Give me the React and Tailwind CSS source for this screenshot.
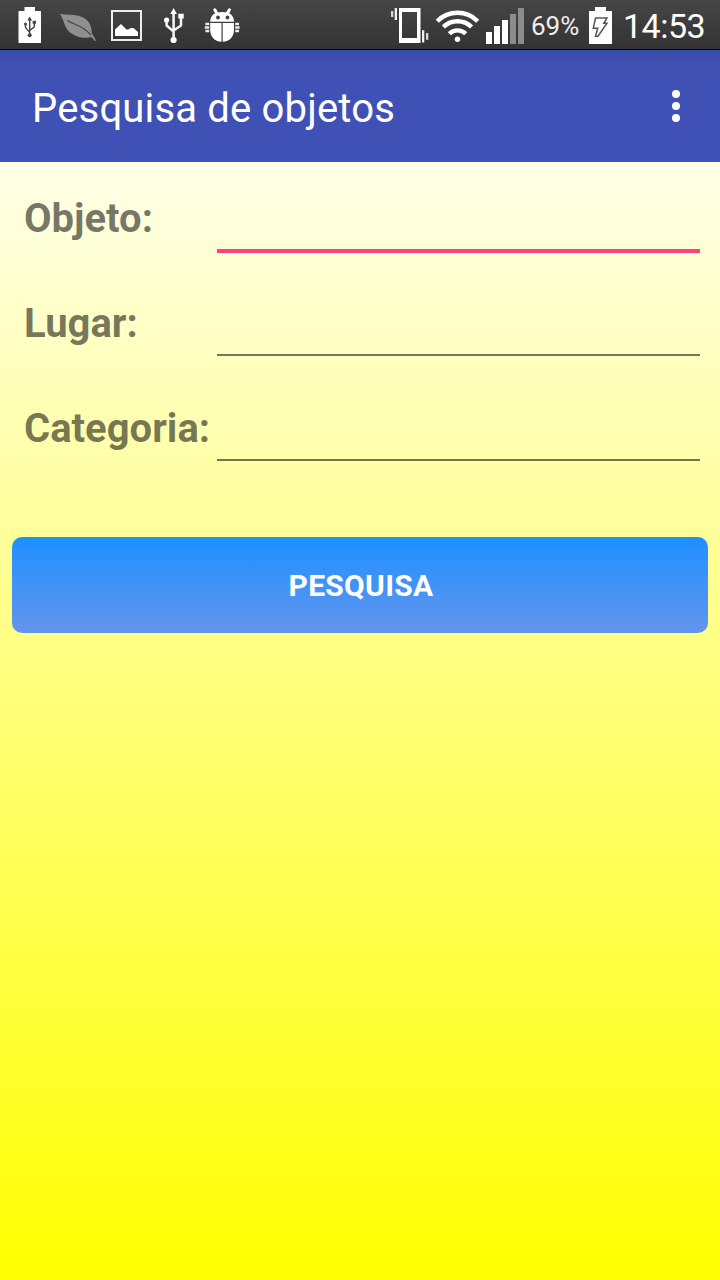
import React from 'react';

function UsbBatteryIcon() {
    return (
        <svg width="24" height="38" viewBox="18 6 24 38" className="shrink-0">
            <path d="M18.500 11h6V7h10.500v4h6v32H18.500z" fill="#fff" />
            <g stroke="#444" strokeWidth="1.400" fill="none">
                <path d="M29.700 19v16M25.500 24v3.600l4.200 4.600M34.300 23v4l-4.600 3.400" />
            </g>
            <g fill="#444">
                <path d="M29.700 16.600l2.400 3.800h-4.800z" />
                <circle cx="25.500" cy="24" r="1.500" />
                <path d="M32.600 20.800h3.400v3h-3.400z" />
                <circle cx="29.700" cy="35.200" r="2" />
            </g>
        </svg>
    );
}

function LeafIcon() {
    return (
        <svg width="38" height="30" viewBox="59 12 38 30" className="shrink-0">
            <path
                d="M59.800 13.800C67 15.200 75 14.300 82 17C89 19.800 91.800 26 91.900 33.500C93.600 35.600 95 38 95.800 41L94.700 41C93.700 39.300 92.500 37.800 90.800 37C84 39.300 75 36.500 70 32.500C64 27.500 64 19.500 59.800 13.800Z"
                fill="#8f8f8f"
            />
            <path d="M67.500 20.300C72 24.500 82 24.500 91 35" stroke="#464646" strokeWidth="1.200" fill="none" />
        </svg>
    );
}

function PictureIcon() {
    return (
        <svg width="32" height="32" viewBox="111 9 32 32" className="shrink-0">
            <rect x="112" y="11" width="29" height="29" fill="none" stroke="#ececec" strokeWidth="2" />
            <path d="M115 36v-6.500l6-5.500 5.500 5.500h1.500l3-1.500h2.500l4.500 4V36z" fill="#fff" />
        </svg>
    );
}

function UsbIcon() {
    return (
        <svg width="22" height="36" viewBox="163 8 22 36" className="shrink-0">
            <g stroke="#f5f5f5" strokeWidth="2.500" fill="none" strokeLinejoin="round">
                <path d="M173.600 12v28M166.600 20v5.500l7 6M181 17v8.500l-7.400 5" />
            </g>
            <g fill="#fff">
                <path d="M173.600 8l3.300 6h-6.600z" />
                <circle cx="166.600" cy="20" r="2.600" />
                <path d="M178.300 13.700h5.400v4.800h-5.400z" />
                <circle cx="173.600" cy="40" r="3.100" />
            </g>
        </svg>
    );
}

function BugIcon() {
    return (
        <svg width="36" height="36" viewBox="204 7 36 36" className="shrink-0">
            <g stroke="#fff" strokeWidth="3" strokeLinecap="round">
                <path d="M214.800 9.800l2.500 4.500M229.400 9.800l-2.500 4.500" />
            </g>
            <path d="M210.200 21.800C210.200 15 215 12 222.100 12S234 15 234 21.800z" fill="#fff" />
            <path d="M210.200 22.900h11.300v18.900C214.500 41.500 210.200 36.500 210.200 30zM222.700 22.900H234v7.100c0 6.500-4.300 11.500-11.300 11.800z" fill="#fff" />
            <g fill="#444">
                <circle cx="218" cy="17.500" r="1.900" />
                <circle cx="227.500" cy="17.500" r="1.900" />
            </g>
            <g stroke="#ececec" strokeWidth="2.400">
                <path d="M205.400 24h3.800M204.800 27.500h4.400M205.400 31h3.800M235.200 24h3.800M235.200 27.500h4.400M235.200 31h3.800" />
            </g>
        </svg>
    );
}

function VibrateIcon() {
    return (
        <svg width="40" height="38" viewBox="390 6 40 38" className="shrink-0">
            <path d="M399 8h21.500v35H399zM402 12v26h15V12z" fill="#fff" fillRule="evenodd" />
            <path d="M394.700 8h2.300v12h-2.300zM422 30.300h2.300v12.200H422z" fill="#f2f2f2" />
            <path d="M391 11h2.300v6H391zM426 33h2.300v6.700H426z" fill="#d5d5d5" />
        </svg>
    );
}

function WifiIcon() {
    return (
        <svg width="44" height="36" viewBox="435 8 44 36" className="shrink-0">
            <g stroke="#fff" strokeWidth="4.400" fill="none">
                <path d="M437.300 21.200A28.500 28.500 0 0 1 477.700 21.200" />
                <path d="M443.400 27A20 20 0 0 1 471.600 27" />
                <path d="M449.300 33.800A11.600 11.600 0 0 1 465.700 33.800" />
            </g>
            <circle cx="457.500" cy="39.300" r="2.700" fill="#fff" />
        </svg>
    );
}

function SignalIcon() {
    return (
        <svg width="38" height="36" viewBox="486 8 38 36" className="shrink-0">
            <path d="M486 32h6v12h-6zM494 26h6v18h-6zM502 20h6v24h-6z" fill="#fff" />
            <path d="M510 14h6v30h-6zM518 8h6v36h-6z" fill="#8c8c8c" />
        </svg>
    );
}

function ChargingIcon() {
    return (
        <svg width="23" height="38" viewBox="589 6 23 38" className="shrink-0">
            <path d="M589 11h6V7h11v4h6v33h-23z" fill="#fff" />
            <path
                d="M595.500 18H607l-3.200 5.300h3.200L598 36.300h-2.500l2.200-8.100h-4.400z"
                fill="none"
                stroke="#555"
                strokeWidth="1.500"
            />
        </svg>
    );
}

function StatusBar() {
    return (
        <header className="flex h-[50px] items-start border-b border-black bg-linear-to-b from-[#464646] to-[#333333] pr-[14px] pl-[18px] text-white">
            <div className="flex h-[50px] items-center">
                <UsbBatteryIcon />
                <div className="ml-[17px] pt-1"><LeafIcon /></div>
                <div className="ml-[14px]"><PictureIcon /></div>
                <div className="ml-5 pt-0.5"><UsbIcon /></div>
                <div className="ml-[19px]"><BugIcon /></div>
            </div>
            <div className="ml-auto flex h-[50px] items-center">
                <VibrateIcon />
                <div className="ml-[5px] pt-0.5"><WifiIcon /></div>
                <div className="ml-[7px] pt-0.5"><SignalIcon /></div>
                <span className="ml-[7px] w-[58px] pt-0.5 text-[26px] leading-[50px] whitespace-nowrap text-[#eeeeee]">69%</span>
                <ChargingIcon />
                <span className="ml-[11px] w-[83px] pt-0.5 text-[34px] leading-[50px] tracking-[-0.5px] whitespace-nowrap">14:53</span>
            </div>
        </header>
    );
}

function Field({ label, focused }) {
    return (
        <label className="flex h-[105px] items-start">
            <span className="w-[193px] shrink-0 pt-[22px] text-[40px] leading-[47px] font-bold whitespace-nowrap text-black/54">
                {label}
            </span>
            <input
                type="text"
                className={
                    focused
                        ? 'h-[80px] min-w-0 flex-1 border-b-4 border-[#ff4081] bg-transparent outline-none'
                        : 'h-[78px] min-w-0 flex-1 border-b-2 border-black/54 bg-transparent outline-none'
                }
            />
        </label>
    );
}

export default function App() {
    return (
        <div className="flex h-[1280px] w-[720px] flex-col overflow-hidden font-['Roboto',sans-serif]">
            <StatusBar />

            {/* App bar */}
            <div className="flex h-[112px] items-center justify-between bg-linear-to-b/srgb from-[#3b4ba8] to-[#3f51b5] to-15% pr-10 pl-8 text-white">
                <h1 className="pt-1.5 text-[40px] leading-[48px] tracking-[0.18px] whitespace-nowrap">Pesquisa de objetos</h1>
                <button className="flex flex-col gap-1" aria-label="Menu">
                    <span className="size-2 rounded-full bg-white" />
                    <span className="size-2 rounded-full bg-white" />
                    <span className="size-2 rounded-full bg-white" />
                </button>
            </div>

            {/* Search form */}
            <main className="flex flex-1 flex-col bg-linear-to-b/srgb from-[#ffffe8] to-[#ffff00] px-3 pt-[11px]">
                <div className="pr-2 pl-3">
                    <Field label="Objeto:" focused />
                    <Field label="Lugar:" />
                    <Field label="Categoria:" />
                </div>
                <button className="mt-[49px] h-24 rounded-[10px] bg-linear-to-b/srgb from-[#1e90ff] to-[#6495ed] pl-0.5 text-[30px] font-bold tracking-[0.3px] text-white">
                    PESQUISA
                </button>
            </main>
        </div>
    );
}
